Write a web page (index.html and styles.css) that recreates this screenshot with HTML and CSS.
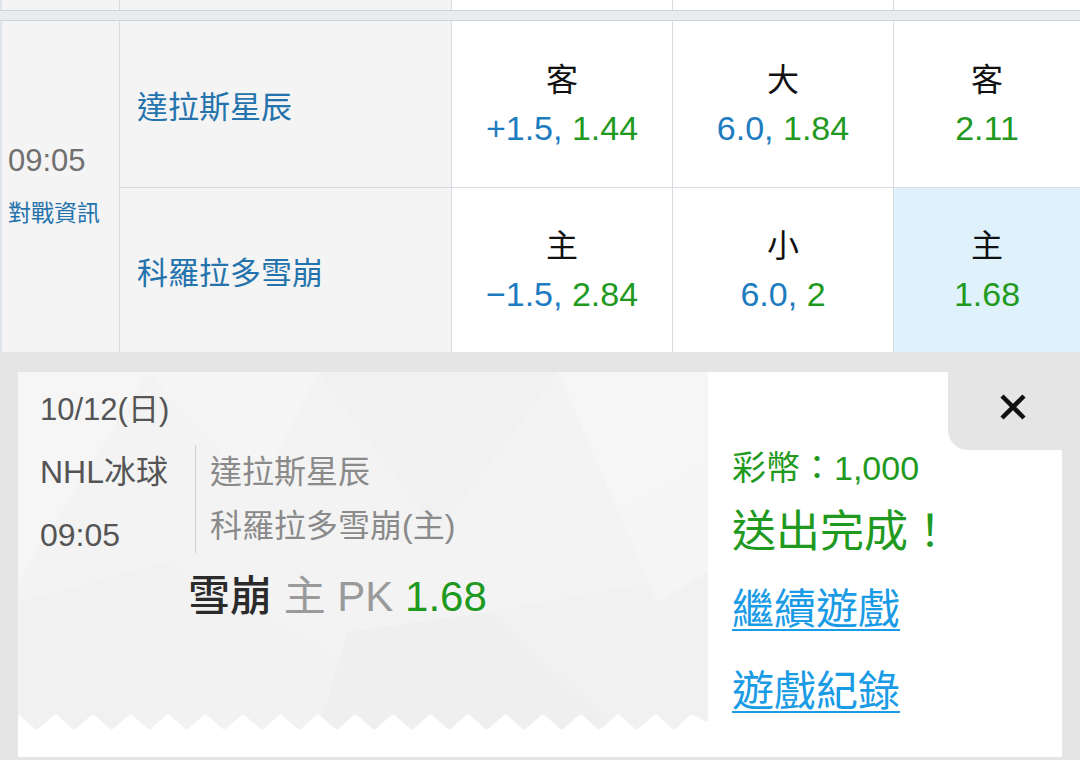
FILE: index.html
```html
<!DOCTYPE html>
<html lang="zh-Hant">
<head>
<meta charset="utf-8">
<title>投注完成</title>
<link rel="stylesheet" href="styles.css">
</head>
<body>
<div class="page">
  <div class="prev-row">
    <div class="pc grey"></div>
    <div class="pc grey"></div>
    <div class="pc white"></div>
    <div class="pc white"></div>
    <div class="pc white last"></div>
  </div>
  <div class="sep"></div>

  <div class="match">
    <div class="time-col">
      <div class="time">09:05</div>
      <div class="vs-info">對戰資訊</div>
    </div>

    <div class="team top">達拉斯星辰</div>
    <div class="odd top">
      <div class="lbl">客</div>
      <div class="val"><span class="blue">+1.5,</span> <span class="green">1.44</span></div>
    </div>
    <div class="odd top">
      <div class="lbl">大</div>
      <div class="val"><span class="blue">6.0,</span> <span class="green">1.84</span></div>
    </div>
    <div class="odd top last">
      <div class="lbl">客</div>
      <div class="val"><span class="green">2.11</span></div>
    </div>

    <div class="team">科羅拉多雪崩</div>
    <div class="odd">
      <div class="lbl">主</div>
      <div class="val"><span class="blue">&minus;1.5,</span> <span class="green">2.84</span></div>
    </div>
    <div class="odd">
      <div class="lbl">小</div>
      <div class="val"><span class="blue">6.0,</span> <span class="green">2</span></div>
    </div>
    <div class="odd last selected">
      <div class="lbl">主</div>
      <div class="val"><span class="green">1.68</span></div>
    </div>
  </div>

  <div class="slip-area">
    <div class="slip">
      <div class="slip-left">
        <svg class="slip-bg" width="690" height="358" viewBox="0 0 690 358" aria-hidden="true">
          <defs>
            <clipPath id="zclip">
              <path d="M0 0H690V350
                L675 343 Q673.1 341.8 671.3 343.3 L658.1 356.6 Q656.25 358.2 654.4 356.6 L639.4 343.3 Q637.5 341.8 635.6 343.3
                L620.6 356.6 Q618.75 358.2 616.9 356.6 L601.9 343.3 Q600 341.8 598.1 343.3
                L583.1 356.6 Q581.25 358.2 579.4 356.6 L564.4 343.3 Q562.5 341.8 560.6 343.3
                L545.6 356.6 Q543.75 358.2 541.9 356.6 L526.9 343.3 Q525 341.8 523.1 343.3
                L508.1 356.6 Q506.25 358.2 504.4 356.6 L489.4 343.3 Q487.5 341.8 485.6 343.3
                L470.6 356.6 Q468.75 358.2 466.9 356.6 L451.9 343.3 Q450 341.8 448.1 343.3
                L433.1 356.6 Q431.25 358.2 429.4 356.6 L414.4 343.3 Q412.5 341.8 410.6 343.3
                L395.6 356.6 Q393.75 358.2 391.9 356.6 L376.9 343.3 Q375 341.8 373.1 343.3
                L358.1 356.6 Q356.25 358.2 354.4 356.6 L339.4 343.3 Q337.5 341.8 335.6 343.3
                L320.6 356.6 Q318.75 358.2 316.9 356.6 L301.9 343.3 Q300 341.8 298.1 343.3
                L283.1 356.6 Q281.25 358.2 279.4 356.6 L264.4 343.3 Q262.5 341.8 260.6 343.3
                L245.6 356.6 Q243.75 358.2 241.9 356.6 L226.9 343.3 Q225 341.8 223.1 343.3
                L208.1 356.6 Q206.25 358.2 204.4 356.6 L189.4 343.3 Q187.5 341.8 185.6 343.3
                L170.6 356.6 Q168.75 358.2 166.9 356.6 L151.9 343.3 Q150 341.8 148.1 343.3
                L133.1 356.6 Q131.25 358.2 129.4 356.6 L114.4 343.3 Q112.5 341.8 110.6 343.3
                L95.6 356.6 Q93.75 358.2 91.9 356.6 L76.9 343.3 Q75 341.8 73.1 343.3
                L58.1 356.6 Q56.25 358.2 54.4 356.6 L39.4 343.3 Q37.5 341.8 35.6 343.3
                L20.6 356.6 Q18.75 358.2 16.9 356.6 L0 342 Z"/>
            </clipPath>
          </defs>
          <g clip-path="url(#zclip)">
            <rect x="0" y="0" width="690" height="358" fill="#f3f3f3"/>
            <polygon points="0,0 130,0 0,210" fill="#f6f6f6"/>
            <polygon points="300,0 540,0 420,160" fill="#f1f1f1"/>
            <polygon points="130,0 300,0 240,120" fill="#f5f5f5"/>
            <polygon points="540,0 690,0 690,90 600,140" fill="#f6f6f6"/>
            <polygon points="0,230 150,190 110,358 0,358" fill="#f1f1f1"/>
            <polygon points="150,190 330,290 300,358 110,358" fill="#f2f2f2"/>
            <polygon points="330,260 470,240 600,358 300,358" fill="#efefef"/>
            <polygon points="470,240 690,200 690,358 600,358" fill="#f1f1f1"/>
            <polygon points="600,140 690,90 690,200 640,230" fill="#f5f5f5"/>
          </g>
        </svg>
        <div class="slip-content">
          <div class="date">10/12(日)</div>
          <div class="info-row">
            <div class="league">
              <div class="lg-name">NHL冰球</div>
              <div class="lg-time">09:05</div>
            </div>
            <div class="teams">
              <div>達拉斯星辰</div>
              <div>科羅拉多雪崩(主)</div>
            </div>
          </div>
          <div class="pick"><span class="pick-team">雪崩</span> <span class="pick-mid">主 PK</span> <span class="green">1.68</span></div>
        </div>
      </div>
      <div class="slip-right">
        <div class="close-tab">
          <svg width="28" height="28" viewBox="0 0 28 28" aria-label="關閉">
            <path d="M3 3L25 25M25 3L3 25" stroke="#111" stroke-width="4.5" fill="none"/>
          </svg>
        </div>
        <div class="coins">彩幣：1,000</div>
        <div class="done">送出完成！</div>
        <a class="link link1" href="#">繼續遊戲</a>
        <a class="link link2" href="#">遊戲紀錄</a>
      </div>
    </div>
  </div>
</div>
</body>
</html>
```

FILE: styles.css
```css
* { box-sizing: border-box; }

body {
  margin: 0;
  font-family: "Liberation Sans", "Noto Sans CJK TC", sans-serif;
  background: #e5e5e5;
}

.page {
  width: 1080px;
  height: 760px;
  overflow: hidden;
  background: #e5e5e5;
}

/* previous row remnant */
.prev-row {
  display: grid;
  grid-template-columns: 118px 332px 221px 221px 1fr;
  height: 10px;
  border-left: 2px solid #dfe5ea;
}
.pc { border-right: 1px solid #d6dce1; }
.pc.grey { background: #f4f4f4; }
.pc.white { background: #fff; }
.pc.last { border-right: none; }

.sep {
  height: 11px;
  background: #e9ecee;
  border-top: 1px solid #cfd4d8;
  border-bottom: 1px solid #cfd4d8;
}

/* match table */
.match {
  display: grid;
  grid-template-columns: 118px 332px 221px 221px 1fr;
  grid-template-rows: 167px 164px;
  border-left: 2px solid #dfe5ea;
}

.time-col {
  grid-row: span 2;
  background: #f4f4f4;
  border-right: 1px solid #d6dce1;
  padding: 120px 0 0 6px;
}
.time {
  font-size: 31px;
  line-height: 40px;
  color: #707070;
}
.vs-info {
  margin-top: 17px;
  font-size: 23px;
  line-height: 30px;
  color: #2473ad;
}

.team {
  background: #f4f4f4;
  border-right: 1px solid #d6dce1;
  display: flex;
  align-items: center;
  padding-left: 17px;
  font-size: 31px;
  color: #2473ad;
}

.odd {
  background: #fff;
  border-right: 1px solid #d6dce1;
  display: flex;
  flex-direction: column;
  align-items: center;
  justify-content: center;
}
.odd.last { border-right: none; }
.odd.selected { background: #dff2fb; }

.top { border-bottom: 1px solid #d6dce1; }

.lbl {
  font-size: 32px;
  line-height: 48px;
  color: #111;
}
.val {
  font-size: 34px;
  line-height: 48px;
}

.blue { color: #1d7cc0; }
.green { color: #1f9a1f; }

/* bet slip */
.slip-area {
  height: 408px;
  padding: 20px 18px 0 18px;
  background: #e5e5e5;
}
.slip {
  display: grid;
  grid-template-columns: 690px 1fr;
  height: 385px;
  background: #fff;
}

.slip-left {
  position: relative;
  padding: 18px 0 0 22px;
}
.slip-bg {
  position: absolute;
  left: 0;
  top: 0;
}
.slip-content { position: relative; }

.date {
  font-size: 31px;
  line-height: 40px;
  color: #555;
}
.info-row {
  display: flex;
  align-items: flex-start;
  margin-top: 15px;
}
.league {
  width: 155px;
  font-size: 32px;
  color: #555;
}
.lg-name { line-height: 54px; }
.lg-time { line-height: 54px; margin-top: 9px; }
.teams {
  border-left: 1px solid #cfcfcf;
  padding-left: 14px;
  font-size: 32px;
  line-height: 54px;
  color: #8a8a8a;
}
.pick {
  margin-top: 10px;
  padding-left: 148px;
  font-size: 42px;
  line-height: 50px;
}
.pick-team { color: #2b2b2b; font-weight: 500; }
.pick-mid { color: #9a9a9a; }

.slip-right {
  display: flex;
  flex-direction: column;
  align-items: flex-start;
  padding-left: 24px;
}
.close-tab {
  align-self: flex-end;
  width: 114px;
  height: 78px;
  background: #e5e5e5;
  border-bottom-left-radius: 20px;
  display: flex;
  align-items: center;
  justify-content: center;
  padding: 0 0 8px 16px;
}
.coins {
  font-size: 34px;
  line-height: 36px;
  color: #1f9a1f;
}
.done {
  margin-top: 23px;
  font-size: 44px;
  line-height: 46px;
  color: #1f9a1f;
}
.link {
  font-size: 42px;
  line-height: 50px;
  color: #1a9be6;
  text-decoration: underline;
  text-decoration-thickness: 2px;
  text-underline-offset: 5px;
}
.link1 { margin-top: 30px; }
.link2 { margin-top: 32px; }
```
